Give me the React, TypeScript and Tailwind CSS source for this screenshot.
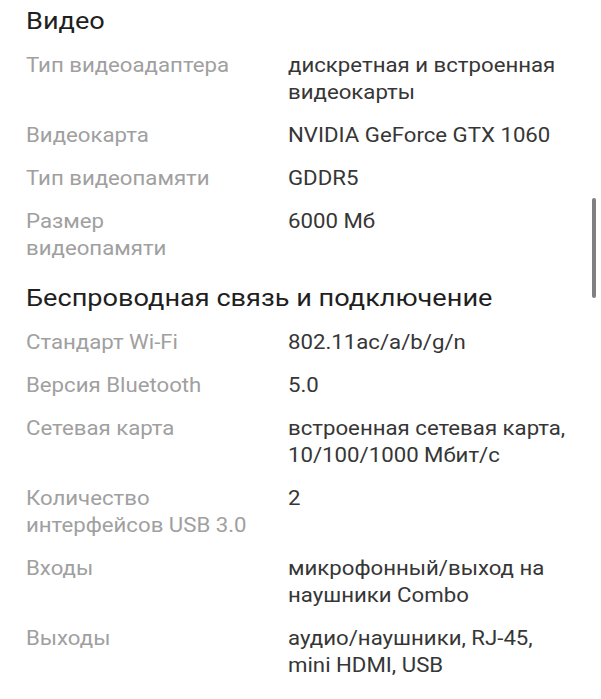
import React from "react";

type Row = { label: string[]; value: string[] };

const video: Row[] = [
  { label: ["Тип видеоадаптера"], value: ["дискретная и встроенная", "видеокарты"] },
  { label: ["Видеокарта"], value: ["NVIDIA GeForce GTX 1060"] },
  { label: ["Тип видеопамяти"], value: ["GDDR5"] },
  { label: ["Размер", "видеопамяти"], value: ["6000 Мб"] },
];

const wireless: Row[] = [
  { label: ["Стандарт Wi-Fi"], value: ["802.11ac/a/b/g/n"] },
  { label: ["Версия Bluetooth"], value: ["5.0"] },
  { label: ["Сетевая карта"], value: ["встроенная сетевая карта,", "10/100/1000 Мбит/с"] },
  { label: ["Количество", "интерфейсов USB 3.0"], value: ["2"] },
  { label: ["Входы"], value: ["микрофонный/выход на", "наушники Combo"] },
  { label: ["Выходы"], value: ["аудио/наушники, RJ-45,", "mini HDMI, USB"] },
];

function Lines({ lines }: { lines: string[] }) {
  return (
    <>
      {lines.map((l, i) => (
        <div key={i} className="whitespace-nowrap">
          {l}
        </div>
      ))}
    </>
  );
}

function Section({ title, rows, className }: { title: string; rows: Row[]; className?: string }) {
  return (
    <section className={className}>
      <h2 className="text-[24px] leading-[32px] text-[#1f1f1f] mb-[15px] origin-left scale-x-[1.13]">
        {title}
      </h2>
      <div className="flex flex-col gap-[16px]">
        {rows.map((r, i) => (
          <div key={i} className="grid grid-cols-[262px_1fr] text-[20px] leading-[27px]">
            <div className="text-[#a0a0a0] origin-left scale-x-[1.11]">
              <Lines lines={r.label} />
            </div>
            <div className="text-[#363636] origin-left scale-x-[1.11]">
              <Lines lines={r.value} />
            </div>
          </div>
        ))}
      </div>
    </section>
  );
}

export default function App() {
  return (
    <div className="relative w-[601px] h-[699px] overflow-hidden bg-white font-['Roboto','Noto_Sans',sans-serif]">
      <div className="pl-[26px] pr-[6px] pt-[5px]">
        <Section title="Видео" rows={video} />
        <Section title="Беспроводная связь и подключение" rows={wireless} className="mt-[20px]" />
      </div>
      <div className="absolute left-[592px] top-[198px] w-[4px] h-[100px] rounded-[2px] bg-[#808080]" />
    </div>
  );
}
